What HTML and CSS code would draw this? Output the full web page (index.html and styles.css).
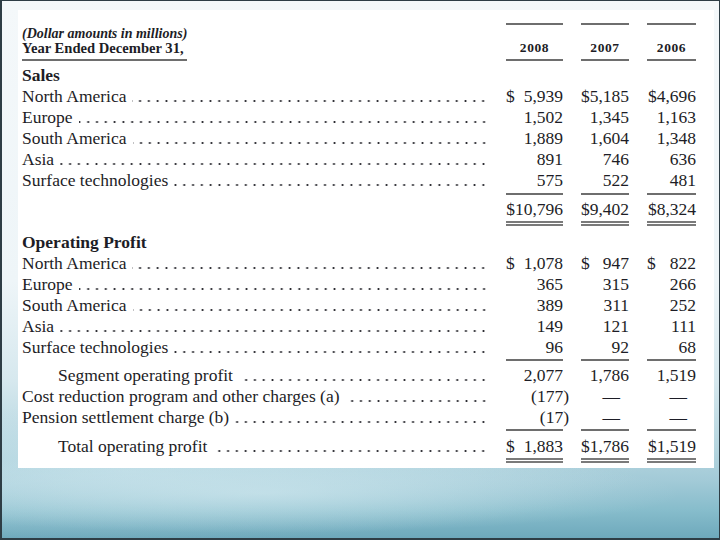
FILE: index.html
```html
<!DOCTYPE html>
<html>
<head>
<meta charset="utf-8">
<link rel="stylesheet" href="styles.css">
</head>
<body>
<div class="slide">
  <div class="sheet">
    <div class="grid hdr">
      <div class="hlab"><i class="unit">(Dollar amounts in millions)</i><br>Year Ended December 31,</div>
      <div class="yr">2008</div>
      <div class="yr">2007</div>
      <div class="yr">2006</div>
    </div>

    <div class="grid row first"><div class="lab b">Sales</div><div></div><div></div><div></div></div>
    <div class="grid row"><div class="lab"><span>North America</span><span class="dots"></span></div><div class="num"><span>$</span><span>5,939</span></div><div class="num">$5,185</div><div class="num">$4,696</div></div>
    <div class="grid row"><div class="lab"><span>Europe</span><span class="dots"></span></div><div class="num">1,502</div><div class="num">1,345</div><div class="num">1,163</div></div>
    <div class="grid row"><div class="lab"><span>South America</span><span class="dots"></span></div><div class="num">1,889</div><div class="num">1,604</div><div class="num">1,348</div></div>
    <div class="grid row"><div class="lab"><span>Asia</span><span class="dots"></span></div><div class="num">891</div><div class="num">746</div><div class="num">636</div></div>
    <div class="grid row"><div class="lab"><span>Surface technologies</span><span class="dots"></span></div><div class="num">575</div><div class="num">522</div><div class="num">481</div></div>
    <div class="grid row sub tot1"><div class="lab"></div><div class="num">$10,796</div><div class="num">$9,402</div><div class="num">$8,324</div></div>

    <div class="grid row op"><div class="lab b">Operating Profit</div><div></div><div></div><div></div></div>
    <div class="grid row"><div class="lab"><span>North America</span><span class="dots"></span></div><div class="num"><span>$</span><span>1,078</span></div><div class="num"><span>$</span><span>947</span></div><div class="num"><span>$</span><span>822</span></div></div>
    <div class="grid row"><div class="lab"><span>Europe</span><span class="dots"></span></div><div class="num">365</div><div class="num">315</div><div class="num">266</div></div>
    <div class="grid row"><div class="lab"><span>South America</span><span class="dots"></span></div><div class="num">389</div><div class="num">311</div><div class="num">252</div></div>
    <div class="grid row"><div class="lab"><span>Asia</span><span class="dots"></span></div><div class="num">149</div><div class="num">121</div><div class="num">111</div></div>
    <div class="grid row"><div class="lab"><span>Surface technologies</span><span class="dots"></span></div><div class="num">96</div><div class="num">92</div><div class="num">68</div></div>
    <div class="grid row sub seg"><div class="lab ind"><span>Segment operating profit</span><span class="dots"></span></div><div class="num">2,077</div><div class="num">1,786</div><div class="num">1,519</div></div>
    <div class="grid row"><div class="lab"><span>Cost reduction program and other charges (a)</span><span class="dots"></span></div><div class="num"><span class="neg">(177)</span></div><div class="num"><span class="dash">—</span></div><div class="num"><span class="dash">—</span></div></div>
    <div class="grid row"><div class="lab"><span>Pension settlement charge (b)</span><span class="dots"></span></div><div class="num"><span class="neg">(17)</span></div><div class="num"><span class="dash">—</span></div><div class="num"><span class="dash">—</span></div></div>
    <div class="grid row sub tot2"><div class="lab ind"><span>Total operating profit</span><span class="dots"></span></div><div class="num"><span>$</span><span>1,883</span></div><div class="num">$1,786</div><div class="num">$1,519</div></div>
  </div>
</div>
</body>
</html>
```

FILE: styles.css
```css
html, body {
  margin: 0;
  padding: 0;
  background: #ffffff;
}

.slide {
  box-sizing: border-box;
  width: 720px;
  height: 540px;
  border: 1px solid #2e3d45;
  border-left-width: 2px;
  border-bottom-width: 2px;
  padding: 9px 6px 0 16px;
  background:
    radial-gradient(ellipse 420px 40px at 260px 492px, rgba(215, 236, 242, 0.55), rgba(215, 236, 242, 0) 100%),
    radial-gradient(ellipse 520px 70px at 120px 470px, rgba(200, 228, 236, 0.6), rgba(200, 228, 236, 0) 100%),
    linear-gradient(180deg, #f4f8fa 0px, #eef5f8 280px, #d6e8ee 380px, #b4d5df 450px, #a2cad7 480px, #86bccb 510px, #6da8bb 538px);
  font-family: "Liberation Serif", "Times New Roman", serif;
  color: #1d1d26;
}

.sheet {
  box-sizing: border-box;
  width: 696px;
  height: 458px;
  background: #ffffff;
  padding: 13px 0 0 4px;
}

.grid {
  display: grid;
  grid-template-columns: 466px 57px 48px 49px;
  column-gap: 18px;
}

.hdr {
  height: 38px;
}

.hlab {
  justify-self: start;
  align-self: end;
  font-weight: bold;
  font-size: 14.6px;
  line-height: 15px;
  padding-bottom: 3px;
  border-bottom: 2px solid #6e6e6e;
  white-space: nowrap;
}

.unit {
  font-size: 14px;
}

.yr {
  box-sizing: border-box;
  height: 38px;
  border-top: 2px solid #6e6e6e;
  border-bottom: 2px solid #6e6e6e;
  display: flex;
  align-items: flex-end;
  justify-content: center;
  padding-bottom: 4px;
  font-size: 13.5px;
  line-height: 14px;
  font-weight: bold;
  letter-spacing: 0.6px;
}

.row {
  font-size: 17.5px;
  line-height: 21px;
}

.row > * {
  height: 21px;
}

.first {
  margin-top: 4px;
}

.b {
  font-weight: bold;
}

.lab {
  display: flex;
  white-space: nowrap;
}

.lab.ind {
  padding-left: 36px;
}

.dots {
  flex: 1;
  margin-left: 6px;
  background-image: radial-gradient(circle at 4.4px 15px, #2a2a30 0, #2a2a30 0.8px, rgba(42, 42, 48, 0) 1.3px);
  background-size: 8.8px 21px;
  background-repeat: repeat-x;
  background-position: right 0 top 0;
}

.num {
  display: flex;
  justify-content: flex-end;
  white-space: nowrap;
}

.num span:first-child:not(:last-child) {
  margin-right: auto;
}

.neg {
  margin-right: -6px;
}

.dash {
  padding-right: 9px;
}

.sub > * {
  border-top: 2px solid transparent;
}

.sub > .num {
  border-top-color: #6e6e6e;
}

.tot1 {
  margin-top: 2px;
}

.tot1 > * {
  padding-top: 4px;
  padding-bottom: 1px;
  border-bottom: 5px double transparent;
}

.tot1 > .num,
.tot2 > .num {
  border-bottom-color: #7a7a7a;
}

.op {
  margin-top: 6px;
}

.seg {
  margin-top: 1px;
}

.seg > * {
  padding-top: 4px;
}

.tot2 {
  margin-top: 1px;
}

.tot2 > * {
  padding-top: 5px;
  padding-bottom: 1px;
  border-bottom: 5px double transparent;
}
```
